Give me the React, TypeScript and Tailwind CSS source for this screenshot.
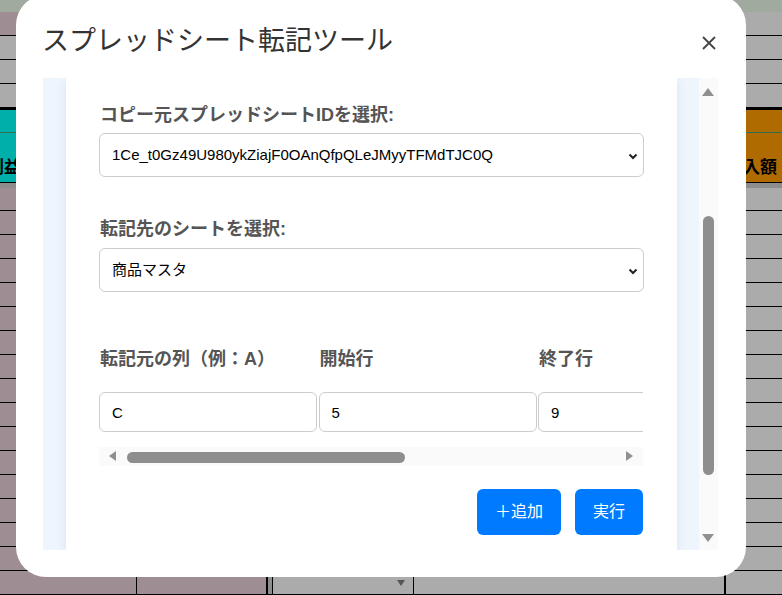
import React from "react";

const font = "font-['Liberation_Sans','Noto_Sans_CJK_JP',sans-serif]";

function BodyRow({ first, arrow }: { first?: boolean; arrow?: boolean }) {
  return (
    <div className={`flex border-b border-black ${first ? "h-[23px]" : "h-[24px]"}`}>
      <div className="w-[137px] bg-[#9e8e93] border-r border-black" />
      <div className="w-[131px] bg-[#9e8e93] border-r-2 border-black" />
      <div className="w-[5px] bg-[#8d8d8d] border-r border-black" />
      <div className="w-[141px] bg-[#ababab] border-r border-black flex items-center justify-end pr-[8px]">
        {arrow && <span className="block w-0 h-0 border-l-[4px] border-r-[4px] border-t-[6px] border-l-transparent border-r-transparent border-t-[#555]" />}
      </div>
      <div className="w-[312px] bg-[#ababab] border-r-2 border-black" />
      <div className="flex-1 bg-[#ababab]" />
    </div>
  );
}

function Sheet() {
  return (
    <div className="flex flex-col w-full h-full">
      <div className="h-[12px] bg-[#a0aa9f]" />
      <div className="flex h-[24px] border-b border-black">
        <div className="w-[268px] bg-[#9e8e93]" />
        <div className="flex-1 bg-[#ababab]" />
      </div>
      <div className="h-[24px] bg-[#ababab] border-b border-black" />
      <div className="h-[24px] bg-[#ababab] border-b border-black" />
      <div className="h-[26px] bg-[#ababab] border-b-[3px] border-black" />
      <div className="flex h-[73px]">
        <div className="w-[725px] bg-[#00afa9] flex flex-col">
          <div className="h-[23px] border-b border-[#2f6f4f]" />
          <div className="flex-1 border-b border-black flex items-end pb-[1px]">
            <span className="ml-[-30px] text-[17px] leading-[26px] font-bold text-black">粗利益</span>
          </div>
        </div>
        <div className="flex-1 bg-[#b06b00] flex flex-col">
          <div className="h-[23px] border-b border-[#2f6f4f]" />
          <div className="flex-1 border-b border-black flex items-end pb-[1px] pl-[1px]">
            <span className="text-[17px] leading-[26px] font-bold text-black whitespace-nowrap">仕入額</span>
          </div>
        </div>
      </div>
      <div className="h-[5px] bg-[#8d8d8d]" />
      <BodyRow first />
      {Array.from({ length: 16 }).map((_, i) => (
        <BodyRow key={i} arrow={i === 15} />
      ))}
    </div>
  );
}

function Field({ value }: { value: string }) {
  return (
    <input
      readOnly
      value={value}
      className="w-[218px] h-[40px] border border-[#ccc] rounded-[6px] pl-[12px] text-[15px] text-black bg-white outline-none"
    />
  );
}

function Picker({ value }: { value: string }) {
  return (
    <div className="relative h-[44px] border border-[#ccc] rounded-[6px] bg-white flex items-center pl-[12px] text-[15px] text-black">
      <span>{value}</span>
      <svg className="absolute right-[5px] top-[19px]" width="10" height="7" viewBox="0 0 10 7">
        <path d="M1.5 1.5 L5 5 L8.5 1.5" fill="none" stroke="#222" strokeWidth="2" />
      </svg>
    </div>
  );
}

export default function App() {
  return (
    <div className={`relative w-[782px] h-[595px] overflow-hidden ${font}`}>
      <Sheet />

      <div className="absolute left-[16px] top-[-5px] w-[730px] h-[582px] rounded-[30px] bg-white pl-[27px] pr-[28px] flex flex-col">
        <div className="h-[83px] pt-[30px] flex items-start justify-between">
          <h1 className="ml-[-1px] text-[27px] leading-[32px] text-[#333] font-normal">スプレッドシート転記ツール</h1>
          <svg className="mt-[11px] mr-[2px]" width="14" height="14" viewBox="0 0 14 14">
            <path d="M1 1 L13 13 M13 1 L1 13" stroke="#444" strokeWidth="1.8" />
          </svg>
        </div>

        <div className="flex h-[472px]">
          <div className="w-[656px] bg-[#eef5fd] pl-[23px] pr-[22px] overflow-hidden">
            <div className="h-full bg-white shadow-[0_2px_10px_rgba(30,60,110,0.09)] px-[33px] pt-[24px]">
              <label className="block ml-px text-[18px] leading-[26px] font-bold text-[#555]">
                コピー元スプレッドシートIDを選択:
              </label>
              <div className="mt-[5px]">
                <Picker value="1Ce_t0Gz49U980ykZiajF0OAnQfpQLeJMyyTFMdTJC0Q" />
              </div>

              <label className="block mt-[39px] ml-px text-[18px] leading-[26px] font-bold text-[#555]">
                転記先のシートを選択:
              </label>
              <div className="mt-[6px]">
                <Picker value="商品マスタ" />
              </div>

              <div className="mt-[54px] w-[544px] overflow-hidden">
                <div className="grid grid-cols-[218px_218px_218px_218px] gap-x-[1.5px] w-max">
                  <div className="ml-px text-[18px] leading-[26px] font-bold text-[#555] whitespace-nowrap">転記元の列（例：A）</div>
                  <div className="ml-px text-[18px] leading-[26px] font-bold text-[#555]">開始行</div>
                  <div className="ml-px text-[18px] leading-[26px] font-bold text-[#555]">終了行</div>
                  <div />
                  <div className="mt-[20px]"><Field value="C" /></div>
                  <div className="mt-[20px]"><Field value="5" /></div>
                  <div className="mt-[20px]"><Field value="9" /></div>
                  <div className="mt-[20px]"><Field value="" /></div>
                </div>
                <div className="relative mt-[15px] h-[19px] bg-[#fafafa]">
                  <span className="absolute left-[10px] top-[4px] w-0 h-0 border-t-[5px] border-b-[5px] border-r-[7px] border-t-transparent border-b-transparent border-r-[#909090]" />
                  <div className="absolute left-[28px] top-[5px] w-[278px] h-[11px] rounded-full bg-[#8e8e8e]" />
                  <span className="absolute right-[10px] top-[4px] w-0 h-0 border-t-[5px] border-b-[5px] border-l-[7px] border-t-transparent border-b-transparent border-l-[#909090]" />
                </div>
              </div>

              <div className="mt-[23px] flex justify-end gap-[14px] pr-px">
                <button className="h-[46px] px-[18px] rounded-[6px] bg-[#007bff] text-white text-[16px]">＋追加</button>
                <button className="h-[46px] px-[18px] rounded-[6px] bg-[#007bff] text-white text-[16px]">実行</button>
              </div>
            </div>
          </div>

          <div className="relative w-[19px] bg-[#fafafa]">
            <span className="absolute left-[3px] top-[10px] w-0 h-0 border-l-[6px] border-r-[6px] border-b-[8px] border-l-transparent border-r-transparent border-b-[#909090]" />
            <div className="absolute left-[4px] top-[138px] w-[11px] h-[259px] rounded-full bg-[#8e8e8e]" />
            <span className="absolute left-[3px] bottom-[8px] w-0 h-0 border-l-[6px] border-r-[6px] border-t-[8px] border-l-transparent border-r-transparent border-t-[#909090]" />
          </div>
        </div>
      </div>
    </div>
  );
}
